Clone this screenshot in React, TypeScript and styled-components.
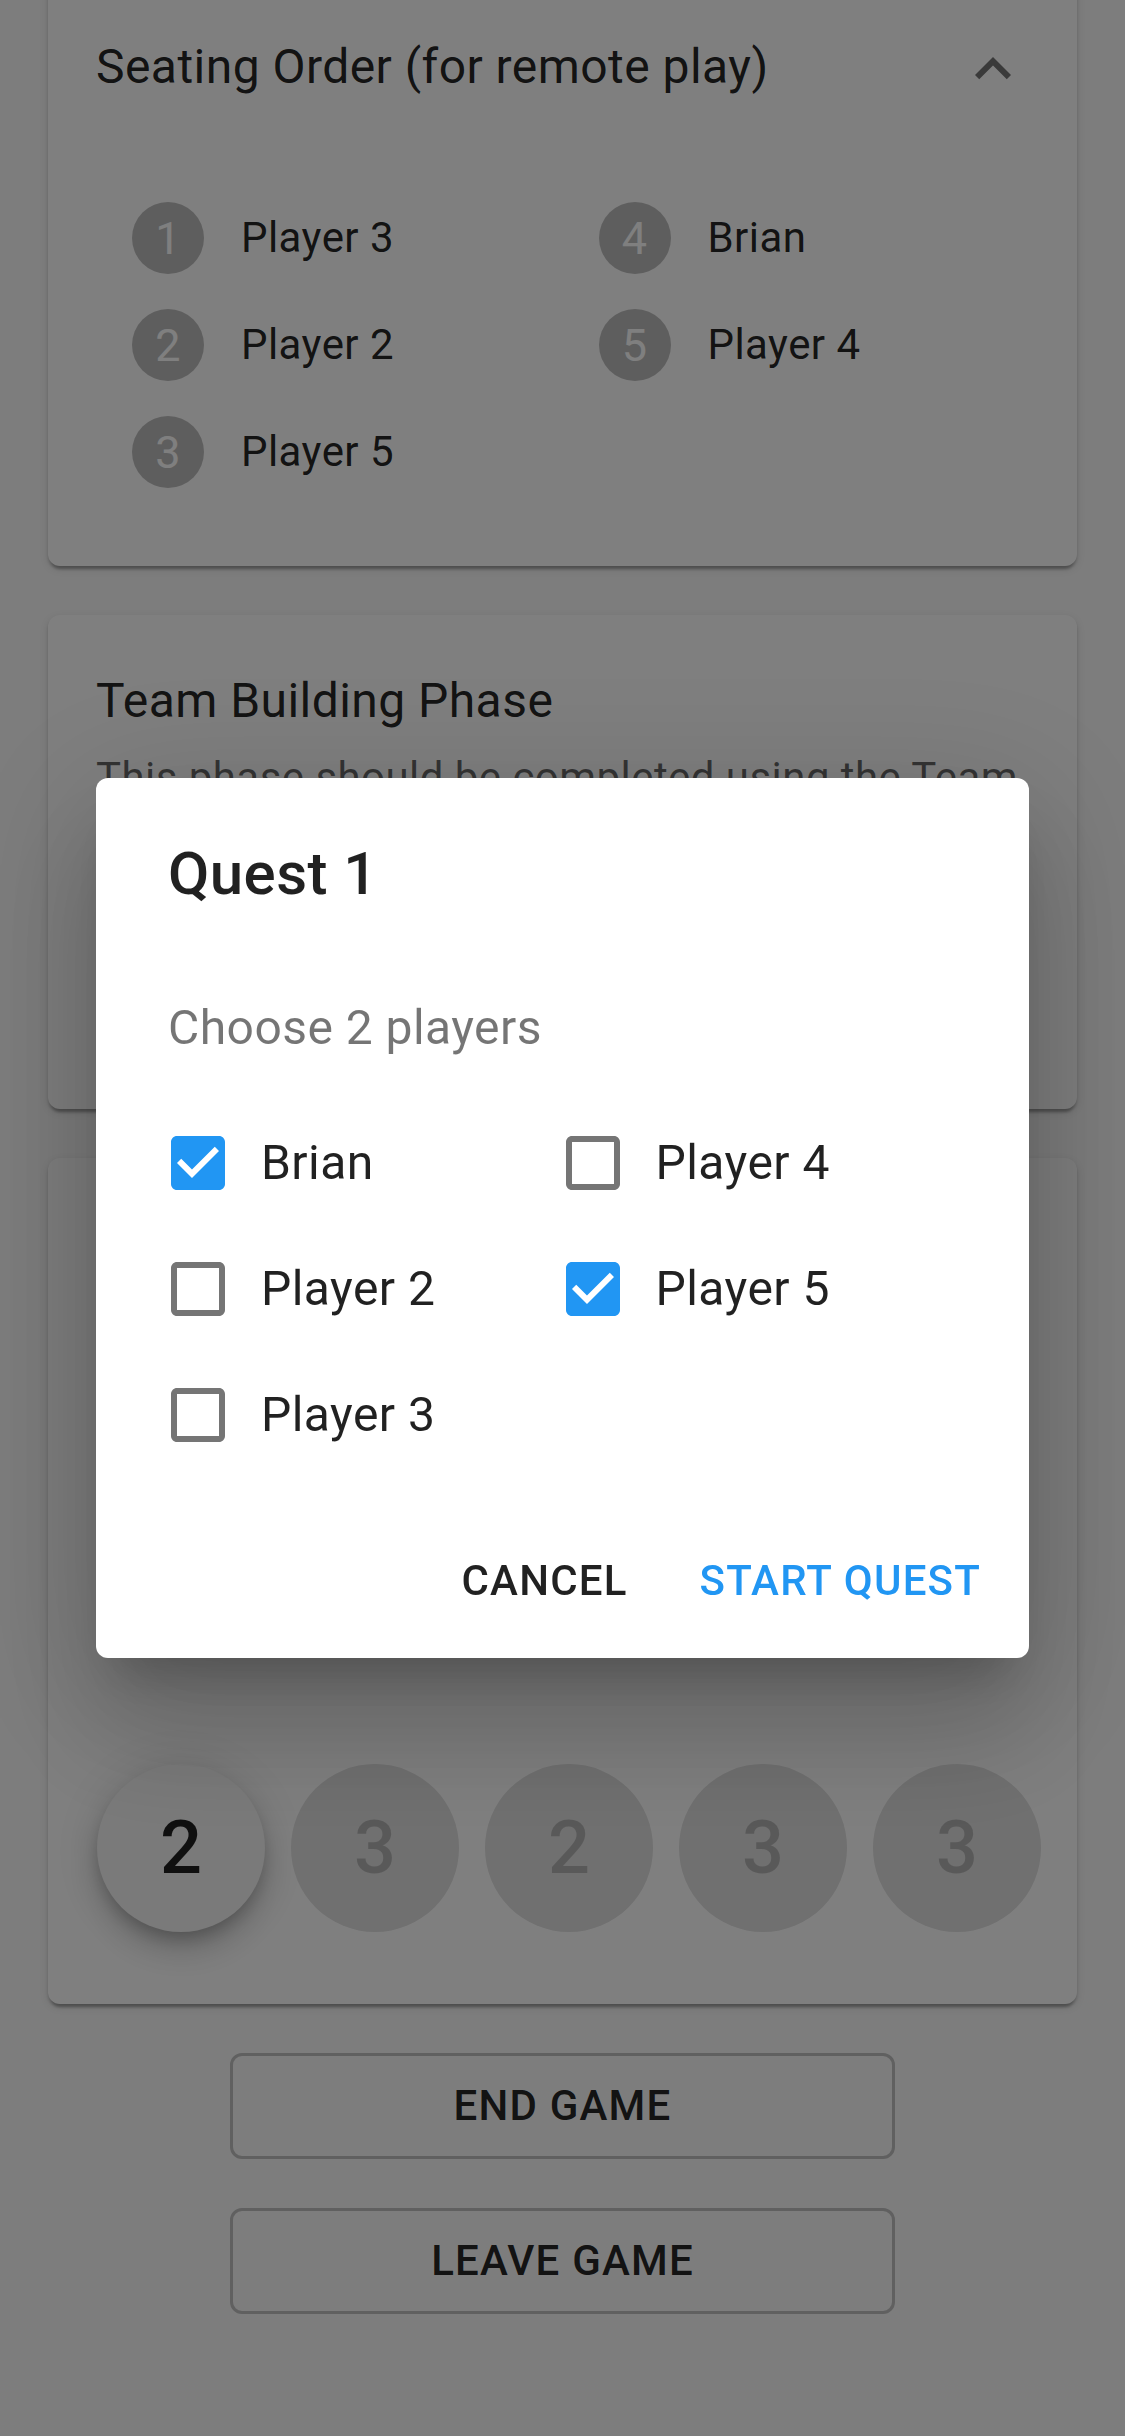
import React from "react";
import styled, { createGlobalStyle } from "styled-components";

const GlobalStyle = createGlobalStyle`
  * { box-sizing: border-box; }
  html, body {
    margin: 0;
    padding: 0;
    background: #fafafa;
  }
  body {
    font-family: Roboto, "Liberation Sans", Arial, sans-serif;
    color: rgba(0, 0, 0, 0.87);
    -webkit-font-smoothing: antialiased;
  }
`;

const Page = styled.main`
  display: flex;
  flex-direction: column;
  gap: 49px;
  padding: 0 48px 122px;
  margin-top: -19px;
  min-height: 100vh;
`;

const Card = styled.section<{ $minHeight?: number; $padBottom?: number }>`
  display: flex;
  flex-direction: column;
  background: #ffffff;
  border-radius: 12px;
  padding: 48px 48px ${(p) => p.$padBottom ?? 48}px;
  min-height: ${(p) => (p.$minHeight ? `${p.$minHeight}px` : "auto")};
  box-shadow: 0 6px 3px -3px rgba(0, 0, 0, 0.2), 0 3px 3px 0 rgba(0, 0, 0, 0.14),
    0 3px 9px 0 rgba(0, 0, 0, 0.12);
`;

const CardHeader = styled.div`
  display: flex;
  align-items: center;
  justify-content: space-between;
`;

const CardTitle = styled.h2`
  margin: 0;
  font-size: 48px;
  font-weight: 400;
  line-height: 1.6;
  letter-spacing: 0.45px;
  color: rgba(0, 0, 0, 0.87);
`;

const CardText = styled.p`
  margin: 8px 0 0;
  font-size: 42px;
  line-height: 1.43;
  letter-spacing: 0.45px;
  color: rgba(0, 0, 0, 0.6);
`;

const IconSlot = styled.span`
  display: flex;
  width: 72px;
  height: 72px;
  margin-top: 4px;
  color: rgba(0, 0, 0, 0.54);
`;

const SeatGrid = styled.ol`
  list-style: none;
  margin: 79px 0 12px;
  padding: 0;
  display: grid;
  grid-template-columns: 1fr 1fr;
  grid-template-rows: repeat(3, 107px);
  grid-auto-flow: column;
`;

const SeatItem = styled.li`
  display: flex;
  align-items: center;
  gap: 37px;
  padding-left: 36px;
`;

const SeatBadge = styled.span`
  width: 72px;
  height: 72px;
  border-radius: 50%;
  background: #bdbdbd;
  color: #ffffff;
  font-size: 45px;
  display: flex;
  align-items: center;
  justify-content: center;
`;

const SeatName = styled.span`
  font-size: 42px;
  line-height: 1.43;
  letter-spacing: 0.45px;
  color: rgba(0, 0, 0, 0.87);
`;

const FabRow = styled.div`
  display: flex;
  gap: 26px;
  margin-top: auto;
  margin-left: 1px;
`;

const Fab = styled.button<{ $active?: boolean }>`
  width: 168px;
  height: 168px;
  flex: none;
  border: none;
  border-radius: 50%;
  padding: 0;
  font-family: Roboto, "Liberation Sans", Arial, sans-serif;
  font-size: 74px;
  font-weight: 500;
  display: flex;
  align-items: center;
  justify-content: center;
  background: ${(p) => (p.$active ? "#f4f4f4" : "#e0e0e0")};
  color: ${(p) => (p.$active ? "rgba(0,0,0,0.87)" : "rgba(0,0,0,0.2)")};
  box-shadow: ${(p) =>
    p.$active
      ? "0 9px 15px -3px rgba(0,0,0,0.2), 0 18px 30px 0 rgba(0,0,0,0.14), 0 3px 54px 0 rgba(0,0,0,0.12)"
      : "none"};
`;

const OutlineButton = styled.button`
  align-self: center;
  width: 665px;
  height: 106px;
  border: 3px solid rgba(0, 0, 0, 0.23);
  border-radius: 12px;
  background: transparent;
  font-family: Roboto, "Liberation Sans", Arial, sans-serif;
  font-size: 42px;
  font-weight: 500;
  letter-spacing: 1.2px;
  text-transform: uppercase;
  color: rgba(0, 0, 0, 0.87);
`;

const Backdrop = styled.div`
  position: fixed;
  inset: 0;
  background: rgba(0, 0, 0, 0.5);
  display: flex;
  align-items: center;
  justify-content: center;
  padding: 0 96px;
`;

const DialogPaper = styled.div`
  width: 100%;
  background: #ffffff;
  border-radius: 12px;
  display: flex;
  flex-direction: column;
  box-shadow: 0 33px 45px -21px rgba(0, 0, 0, 0.2), 0 72px 114px 9px rgba(0, 0, 0, 0.14),
    0 27px 138px 24px rgba(0, 0, 0, 0.12);
`;

const DialogTitle = styled.h1`
  margin: 0;
  padding: 48px 72px;
  font-size: 60px;
  font-weight: 500;
  line-height: 1.6;
  letter-spacing: 0.45px;
  color: rgba(0, 0, 0, 0.87);
`;

const DialogContent = styled.div`
  padding: 22px 72px 24px;
`;

const DialogText = styled.p`
  margin: 0 0 36px;
  font-size: 48px;
  line-height: 1.5;
  letter-spacing: 0.45px;
  color: rgba(0, 0, 0, 0.54);
`;

const CheckGrid = styled.div`
  display: grid;
  grid-template-columns: 1fr 1fr;
  grid-template-rows: repeat(3, 126px);
  grid-auto-flow: column;
`;

const CheckLabel = styled.label`
  display: flex;
  align-items: center;
  margin-left: -33px;
`;

const CheckBoxRoot = styled.span<{ $checked?: boolean }>`
  display: flex;
  padding: 27px;
  color: ${(p) => (p.$checked ? "#2196f3" : "rgba(0,0,0,0.54)")};
`;

const CheckText = styled.span`
  font-size: 48px;
  line-height: 1.5;
  letter-spacing: 0.45px;
  color: rgba(0, 0, 0, 0.87);
`;

const DialogActions = styled.div`
  display: flex;
  justify-content: flex-end;
  gap: 24px;
  padding: 24px;
`;

const TextButton = styled.button<{ $primary?: boolean }>`
  height: 108px;
  min-width: 192px;
  padding: 0 24px;
  border: none;
  background: transparent;
  font-family: Roboto, "Liberation Sans", Arial, sans-serif;
  font-size: 42px;
  font-weight: 500;
  letter-spacing: 1.2px;
  text-transform: uppercase;
  color: ${(p) => (p.$primary ? "#2196f3" : "rgba(0,0,0,0.87)")};
`;

const ExpandLessIcon = () => (
  <svg width="72" height="72" viewBox="0 0 24 24" fill="currentColor" aria-hidden>
    <path d="M12 8l-6 6 1.41 1.41L12 10.83l4.59 4.58L18 14z" />
  </svg>
);

const CheckIcon = ({ checked }: { checked: boolean }) => (
  <svg width="72" height="72" viewBox="0 0 24 24" fill="currentColor" aria-hidden>
    {checked ? (
      <path d="M19 3H5c-1.11 0-2 .9-2 2v14c0 1.1.89 2 2 2h14c1.11 0 2-.9 2-2V5c0-1.1-.89-2-2-2zm-9 14l-5-5 1.41-1.41L10 14.17l7.59-7.59L19 8l-9 9z" />
    ) : (
      <path d="M19 5v14H5V5h14m0-2H5c-1.1 0-2 .9-2 2v14c0 1.1.9 2 2 2h14c1.1 0 2-.9 2-2V5c0-1.1-.9-2-2-2z" />
    )}
  </svg>
);

const seats = ["Player 3", "Player 2", "Player 5", "Brian", "Player 4"];
const quests = [2, 3, 2, 3, 3];
const choices = [
  { name: "Brian", checked: true },
  { name: "Player 2", checked: false },
  { name: "Player 3", checked: false },
  { name: "Player 4", checked: false },
  { name: "Player 5", checked: true },
];

export default function App() {
  return (
    <>
      <GlobalStyle />
      <Page>
        <Card>
          <CardHeader>
            <CardTitle>Seating Order (for remote play)</CardTitle>
            <IconSlot>
              <ExpandLessIcon />
            </IconSlot>
          </CardHeader>
          <SeatGrid>
            {seats.map((name, i) => (
              <SeatItem key={name}>
                <SeatBadge>{i + 1}</SeatBadge>
                <SeatName>{name}</SeatName>
              </SeatItem>
            ))}
          </SeatGrid>
        </Card>

        <Card $minHeight={494}>
          <CardTitle>Team Building Phase</CardTitle>
          <CardText>This phase should be completed using the Team</CardText>
        </Card>

        <Card $minHeight={846} $padBottom={72}>
          <FabRow>
            {quests.map((n, i) => (
              <Fab key={i} $active={i === 0}>
                {n}
              </Fab>
            ))}
          </FabRow>
        </Card>

        <OutlineButton>End Game</OutlineButton>
        <OutlineButton>Leave Game</OutlineButton>
      </Page>

      <Backdrop>
        <DialogPaper role="dialog">
          <DialogTitle>Quest 1</DialogTitle>
          <DialogContent>
            <DialogText>Choose 2 players</DialogText>
            <CheckGrid>
              {choices.map((c) => (
                <CheckLabel key={c.name}>
                  <CheckBoxRoot $checked={c.checked}>
                    <CheckIcon checked={c.checked} />
                  </CheckBoxRoot>
                  <CheckText>{c.name}</CheckText>
                </CheckLabel>
              ))}
            </CheckGrid>
          </DialogContent>
          <DialogActions>
            <TextButton>Cancel</TextButton>
            <TextButton $primary>Start Quest</TextButton>
          </DialogActions>
        </DialogPaper>
      </Backdrop>
    </>
  );
}
